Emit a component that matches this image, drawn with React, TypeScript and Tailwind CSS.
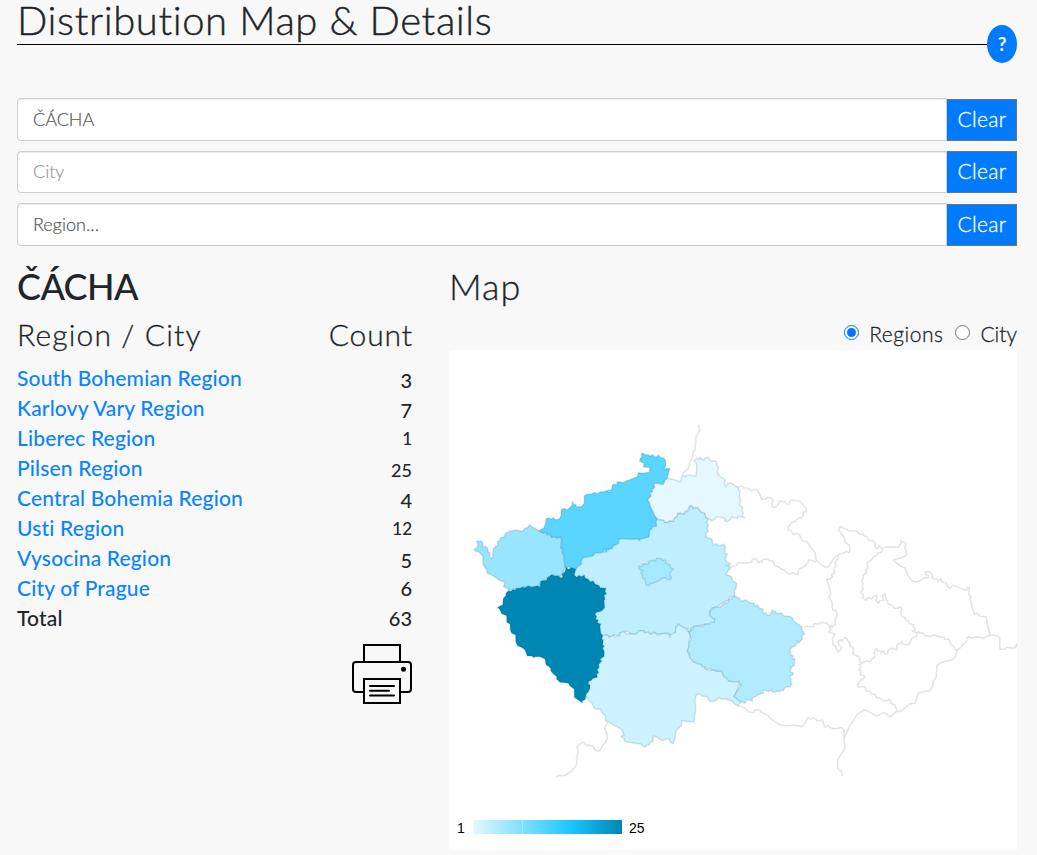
import React from "react";

type Segment = [number, number, string];

// Outlines are stored as runs of points at three units per map pixel, each run with its own origin.
const outline = (segments: Segment[], closed = true) => {
  const points = segments.flatMap(([ox, oy, run]) =>
    run.split(" ").map((pair) => {
      const [x, y] = pair.split(",").map(Number);
      return `${(ox + x / 3).toFixed(1)} ${(oy + y / 3).toFixed(1)}`;
    }),
  );
  return `M${points.join("L")}${closed ? "Z" : ""}`;
};

const regions: { name: string; fill: string; segments: Segment[] }[] = [
  {
    name: "Central Bohemia",
    fill: "#bfeeff",
    segments: [
      [600, 420, "170,298 190,300 195,307 205,306 208,302 220,304 222,295 230,290 233,280 240,279 252,283 254,276 265,270 268,258 275,257 280,264 292,262 300,272 303,276 315,280 318,293 325,298 320,306 325,315 322,325 325,335 318,340 318,352 335,356 340,375 350,371 355,377 372,373 376,382 375,400 382,402 376,412 378,425 392,432 385,438"],
      [580, 540, "437,75 450,80 445,92 438,103 455,110 457,122 470,130 468,145 463,152 465,168 448,172 446,180 430,187 410,202 395,204 389,215 392,228 405,237 405,247 396,258 385,252 365,255 345,260 333,265 332,275 325,275 322,265 310,265 295,253 288,262 287,274 280,288 270,284 260,280 245,282 230,282 222,275 215,282 205,278 200,282 191,272 180,272 170,283 155,282 137,273 133,280 120,279 116,287 105,284 100,292 88,290 80,285 68,290"],
      [480, 560, "340,230 330,180 350,100 280,60 270,20"],
      [600, 420, "0,380 100,340 165,290"],
    ],
  },
  {
    name: "Liberec",
    fill: "#e5f8ff",
    segments: [
      [600, 420, "204,175 215,178 225,180 240,185 248,168 256,169 265,165 288,168 290,150 290,135 287,126 282,122 290,115 297,118 300,112 305,117 313,122 315,113 325,112 330,120 335,125 343,122 350,125 350,134 355,140 352,158 360,170 375,178 373,190 378,200 383,191 390,188 400,193 413,202 417,212 420,215 418,227 421,240 419,255 427,262 425,272 430,278 427,288 434,293 420,290 415,289 412,295 395,290 390,300 383,305 375,302 375,295 350,290 345,297 335,302 322,294 318,293 315,280 303,276 300,272 292,262 280,264 275,257 268,258 265,270 254,276 252,283 240,279 233,280 230,290 222,295 220,304 208,302 205,306 195,307 190,300 170,298 160,278 150,258 142,240 150,230 155,215 163,203 161,190 175,190 188,193 194,180"],
    ],
  },
  {
    name: "South Bohemian",
    fill: "#ccf3ff",
    segments: [
      [570, 620, "95,48 105,44 115,47 118,52 130,45 135,52 150,47 150,38 163,34 168,42 185,42 200,42 205,32 220,32 224,39 235,36 240,42 255,38 262,45 285,40 297,42 300,52 304,43 317,37 317,24 325,12 340,22 350,28 354,36 358,35 362,50 358,60 358,75 353,95 362,112 375,128 388,124 390,132 402,137 405,147 421,152 425,147 435,153 454,152 460,165 475,175 478,184 487,182 510,185 513,194 505,198 502,213 492,230 515,245 502,257 492,250 485,243 465,236 456,238 445,233 440,240 425,245 418,243 412,230 395,228 390,223 380,222 375,240 377,270 373,290 373,305 360,305 335,302 335,315 318,332 315,355 310,370 302,368 300,360 292,355 278,362 257,350 250,348 248,365 240,366 238,375 230,375 225,382 220,379 212,372 165,365 162,355 153,350 162,345 158,340 160,335 150,325 125,312 116,306 108,303 105,285 95,278 92,268 75,267 65,250 48,230 40,180 60,60"],
    ],
  },
  {
    name: "Vysocina",
    fill: "#b2ebff",
    segments: [
      [680, 560, "162,108 178,115 185,124 197,120 205,124 210,130 222,130 225,138 232,135 240,145 248,147 248,158 259,159 262,166 270,165 277,150 284,154 290,160 305,160 312,168 330,169 338,175 341,183 352,191 365,200 367,213 374,222 365,229 367,238 355,250 352,242 350,250 345,258 335,262 329,270 332,285 340,288 337,295 345,298 342,317 335,320 330,335 340,338 338,345 330,348 332,358 332,365 336,372 330,380 315,382 310,392 305,390 298,395 290,393 285,397 277,396 275,390 265,394 250,390 250,400 237,403 225,410 217,413 217,424 205,418 198,422 195,430 188,425 175,422 170,415 162,410 170,395 180,380 185,375 177,370 178,364 160,365 145,362 141,356 130,348 127,332 112,334 104,329 95,330 91,325 79,328 75,321 66,319 65,312 55,312 45,307 38,304 28,290 28,280 22,272 26,262 28,245 34,240 28,215 34,212 35,205 40,207 42,198 70,198 75,193 90,192 92,187 103,187 105,177 98,175 88,165 92,150 103,142 120,142 132,130 145,127 146,119 155,116"],
    ],
  },
  {
    name: "City of Prague",
    fill: "#a6e8ff",
    segments: [
      [580, 540, "175,78 185,80 190,72 205,73 207,64 220,61 227,63 230,55 245,56 248,61 257,61 258,70 270,75 272,84 281,87 270,98 270,107 275,113 270,119 262,118 257,113 245,115 235,123 215,131 210,129 208,137 198,135 195,118 187,114 187,105 182,99 189,92 178,88"],
    ],
  },
  {
    name: "Karlovy Vary",
    fill: "#99e5ff",
    segments: [
      [465, 440, "35,303 49,303 53,310 53,320 62,319 68,325 70,337 75,338 75,354 83,354 83,337 86,325 98,315 98,305 105,300 106,293 118,290 121,281 130,275 152,270 165,272 170,275 180,265 188,262 194,254 200,260 212,266 222,272 235,279 245,277 247,284 256,283 260,292 267,289 275,293 287,291 290,300 288,325 295,327 291,335 298,350 298,362 300,380 295,395"],
      [480, 560, "240,52 215,45 200,55 180,68 180,80 155,82 145,78 120,85 100,88 85,93 85,86 75,82 70,80 75,70 72,65 60,62 50,55 38,47 30,42 22,40 20,30 10,15 8,0"],
      [465, 440, "55,352 50,346 45,340 38,333 33,335 28,328 38,321 38,313"],
    ],
  },
  {
    name: "Usti",
    fill: "#59d5ff",
    segments: [
      [465, 440, "222,272 237,263 242,248 243,236 252,234 258,238 265,233 272,239 283,237 288,228 289,209 297,205 305,210 312,205 322,195 322,184 327,193 333,195 335,201 342,199 346,201 353,196 358,190 358,167 365,163 380,162 388,157 396,161 407,155 425,154 436,156 438,149"],
      [600, 420, "0,217 30,213 35,207 37,195 42,193 50,194 51,186 62,185 68,188 80,182 95,177 112,170 115,158 128,160 148,157 150,143 130,140 133,130 119,124 121,115 125,112 124,101 129,99 135,104 147,104 149,109 158,104 164,110 172,110 175,104 180,112 192,115 197,122 197,137 192,148 202,145 209,146 205,163 201,175 194,180 192,190 188,193 175,190 161,190 163,203 155,208 157,215 150,217 152,230 147,232 142,242 148,246 150,258 160,278 163,288 172,296 168,305 170,318 157,321 155,327 149,330 147,351 136,354 120,358 120,362 112,357 90,358 60,356 55,362 57,370 38,379 37,385 25,386 20,395 10,397"],
      [465, 440, "440,325 430,326 425,332 417,327 415,336 408,338 390,340 384,348 375,350 355,352 348,365 350,372 338,380 330,392 318,386 312,380 303,385 300,380 298,362 298,350 291,335 295,327 288,325 290,300 287,291 275,293 267,289 260,292 256,283 247,284 245,277 235,279"],
    ],
  },
  {
    name: "Pilsen",
    fill: "#0086b3",
    segments: [
      [480, 560, "258,22 265,28 275,23 287,28 283,45 290,52 297,46 304,50 313,45 315,54 325,58 330,65 340,63 345,72 358,77 360,83 378,85 375,95 380,102 372,105 375,118 372,120 374,143 365,152 358,155 350,157 345,162 350,170 346,178 355,180 352,188 362,192 360,200 362,218 368,228 365,237 370,240 368,255 373,258 368,265 373,275 372,290 365,293 360,300 365,303 355,315 358,320 352,330 356,338 350,342 352,352 340,355 332,362 326,364 325,373 330,374 330,385 325,395 318,403 316,418 307,423 307,429 295,420 283,412 283,388 270,378 265,370 255,368 240,367 230,358 230,350 218,340 212,332 212,325 205,318 198,315 195,297 180,290 165,290 162,293 155,288 142,288 135,270 128,264 113,257 107,245 107,225 95,220 91,210 90,192 80,187 80,167 65,161 60,150 53,142 68,134 70,115 77,108 78,100 85,93 93,94 100,88 104,91 110,85 120,85 130,80 132,84 145,78 155,82 172,77 180,82 182,64 200,60 201,55 215,44 225,48 235,47 242,54 248,50 246,42 255,35"],
    ],
  },
];

const borders: Segment[][] = [
  [[600, 420, "413,202 425,198 432,204 443,205 455,213 470,208"], [740, 480, "52,31 60,45 65,58 78,57 80,52 92,53 97,57 100,65 95,67 97,80 104,83 113,75 120,63 135,65 143,74 148,72 152,60 178,62 190,75 200,90 198,95 190,96 190,106 184,113 175,114 168,122 153,130 150,137 144,140 145,150 152,151 160,164 170,160 178,163 186,182 200,185 213,203 225,217 228,240 245,255 260,263 267,258 283,233 298,222 310,220 320,214 325,218 330,214 328,195 315,187 312,172 308,165 295,150 302,139 310,144 320,148 328,153 350,153 360,163 370,162 372,168 380,170 387,181 400,183 407,190 404,200 412,206 416,198 425,205 445,201 473,202 483,191 482,182 490,186 499,190 494,205 499,212 500,225 485,233 470,237 460,241 480,257 495,265 505,288 515,302 525,305 535,305 555,293 565,293 565,284 557,284 557,276 568,275 577,284 576,294 595,299 594,305 603,296 604,305 619,309 622,319 630,325 638,316 675,331 680,330 680,324 688,323 687,345 694,352 690,358 693,365 699,390 703,402 710,399 720,409 738,410 745,445 750,465"]],
  [[600, 420, "388,449 398,437 407,437 413,430"], [740, 480, "0,248 20,250 35,246 37,238 47,236 53,243 53,249 62,244 65,247 67,240 82,236 88,242 98,242 105,257 115,260 125,268 133,270 140,279 150,283 159,278 167,283 173,284 177,268 195,258 208,240 228,245"]],
  [[740, 480, "298,222 290,242 284,249 288,255 283,265 283,279 275,283 277,290 269,298 260,297 268,323 272,339 267,351 276,367 276,382 280,392 287,390 292,405 290,412 284,417 287,434 276,437 277,443 268,440 272,450 266,457 285,462 278,475 279,495 287,498 287,505 295,515 303,508 305,503 297,495 294,485 302,478 305,484 315,473 320,476 330,491 330,498 340,503 340,513 337,519 347,527 358,530 360,545 365,550 357,555 363,560 357,570 363,573 360,583 374,588 370,599 364,598 353,615 353,620 375,620 378,633 388,632 397,643 405,643 411,656 418,653 430,663 446,661 447,657 454,663 451,669 465,675 472,693"]],
  [[740, 480, "190,440 202,439 220,440 222,431 237,431 245,427 260,430 265,435 280,438"]],
  [[740, 480, "425,205 427,214 421,218 412,218 412,225 400,230 397,238 382,248 384,262 377,272 380,277 370,285 370,295 364,302 370,310 366,320 369,326 361,337 370,345 367,352 378,361 384,352 394,357 404,347 411,346 410,357 408,362 416,370 418,362 431,361 428,347 435,341 439,361 443,363 445,373 458,376 462,385 472,385 480,380 485,385 482,403 488,410 493,411 499,422 505,423 507,430 521,434 519,440 527,449 516,452 524,457 535,460"]],
  [[740, 480, "365,550 380,543 390,545 395,539 405,530 403,514 410,505 413,513 423,513 423,519 431,513 434,522 443,521 445,509 456,505 471,509 470,495 477,491 484,490 485,484 490,492 503,495 505,491 509,492 515,476 530,467 530,460 536,455 540,460 547,458 555,467 573,469 582,464 600,472 612,472 614,478 625,478 630,484 632,493 640,498 644,507 652,510 660,504 668,494 680,484 680,474 688,470 693,474 711,471 720,472 730,475 750,465 760,466 775,468 779,474 780,507 795,508 801,502 820,505 827,501 831,490"]],
  [[570, 620, "502,257 520,260 530,270 540,277"], [740, 480, "42,696 44,689 60,689 62,695 85,707 87,712 105,725 120,735 135,737 170,736 185,740 193,732 200,719 203,712 213,717 221,713 232,723 248,721 253,740 258,741 262,737 281,747 305,743 312,750 312,780 316,805 305,820 293,839 293,865 303,873 307,888"]],
  [[740, 480, "312,775 330,735 343,718 352,703 372,690 378,691 410,708 430,698 438,700 447,710 459,705 460,701 472,693 480,695 490,688 508,672 525,670 535,640 545,637 570,632 577,621 581,603 588,592 592,555 605,547 635,540 645,532 652,510"]],
  [[600, 420, "246,168 250,159 265,145 272,123 277,115 280,95 285,91 288,52 298,33 298,20 293,15"]],
  [[445, 700, "488,68 482,78 479,86 485,98 487,115 480,130 476,132 470,141 466,151 458,154 449,148 443,137 435,137 431,134 427,138 421,133 413,126 398,138 396,141 399,150 399,162 394,172 396,182 393,197 382,211 366,223 357,227 342,226 333,230"]],
];

// Counts sit like old-style figures: ascending ones on the line, the rest lowered or small.
const rows = [
  { name: "South Bohemian Region", count: "3", cls: "top-[2px]" },
  { name: "Karlovy Vary Region", count: "7", cls: "top-[2px]" },
  { name: "Liberec Region", count: "1", cls: "top-px text-[17px]" },
  { name: "Pilsen Region", count: "25", cls: "top-[2px] text-[18px]" },
  { name: "Central Bohemia Region", count: "4", cls: "top-[2px]" },
  { name: "Usti Region", count: "12", cls: "top-px text-[17px]" },
  { name: "Vysocina Region", count: "5", cls: "top-[2px]" },
  { name: "City of Prague", count: "6", cls: "" },
];

function Field({ text, textClass, className }: { text: string; textClass: string; className: string }) {
  return (
    <div className={`flex items-end ${className}`}>
      <div className="flex h-full flex-1 items-center rounded-l-[4px] border border-[#ccc] bg-white pb-[2px] pl-[15px] shadow-[inset_0_1px_1px_rgba(0,0,0,0.075)]">
        <span className={`text-[18px] leading-[24px] [-webkit-text-stroke:0.2px] ${textClass}`}>{text}</span>
      </div>
      <button className="h-[42px] w-[70px] border border-[#6c757d] border-l-[#007bff] bg-[#007bff] pb-[2px] text-[21px] leading-[30px] tracking-[0.35px] text-white [-webkit-text-stroke:0.3px]">
        Clear
      </button>
    </div>
  );
}

function PrinterIcon() {
  return (
    <svg width="60" height="60" viewBox="0 0 60 60" fill="none" stroke="#000" strokeWidth="2">
      <path d="M12 18V1h36v17" />
      <path d="M12 48H4a3 3 0 0 1-3-3V21a3 3 0 0 1 3-3h52a3 3 0 0 1 3 3v24a3 3 0 0 1-3 3h-8" />
      <path d="M12 35h36v24H12z" />
      <path d="M18 42h24M18 46.8h19M18 51.6h24" strokeLinecap="round" />
      <circle cx="51.5" cy="25.3" r="2.5" fill="#000" stroke="none" />
    </svg>
  );
}

export default function App() {
  return (
    <div className="min-h-[855px] w-full bg-[#f8f8f8] pr-5 pl-[17px] font-['Lato',sans-serif] font-light text-[#212529]">
      <header className="relative h-[45px] border-b border-black">
        <h1 className="text-[40px] leading-[40px] tracking-[0.6px] whitespace-nowrap [-webkit-text-stroke:0.4px]">Distribution Map &amp; Details</h1>
        <button className="absolute top-[25px] right-0 h-[38px] w-[30px] rounded-[50%] bg-[#007bff] text-[19px] leading-[38px] font-bold text-white">
          ?
        </button>
      </header>

      <section className="pt-[53px]">
        <Field text="ČÁCHA" textClass="text-[#555]" className="h-[43px]" />
        <Field text="City" textClass="text-[#999]" className="mt-[10px] h-[42px]" />
        <Field text="Region…" textClass="text-[#555]" className="mt-[10px] h-[43px]" />
      </section>

      <main className="flex h-[609px] justify-between">
        <section className="w-[395px] pt-[19px]">
          <h2 className="text-[36px] leading-[42px] font-medium tracking-[-0.6px] whitespace-nowrap">ČÁCHA</h2>
          <div className="mt-[9px] flex h-[36px] justify-between text-[30px] leading-[36px] [-webkit-text-stroke:0.3px]">
            <span className="tracking-[1.15px]">Region / City</span>
            <span className="-mr-px tracking-[0.9px]">Count</span>
          </div>
          <div className="mt-[11px] text-[20px] font-medium">
            {rows.map((row) => (
              <div key={row.name} className="flex h-[30px] justify-between leading-[30px]">
                <a className="text-[21px] tracking-[0.16px] text-[#0a84ff]">{row.name}</a>
                <span className={`relative ${row.cls}`}>{row.count}</span>
              </div>
            ))}
            <div className="flex h-[30px] justify-between leading-[30px]">
              <span className="text-[21px] tracking-[0.16px]">Total</span>
              <span>63</span>
            </div>
          </div>
          <div className="mt-[11px] flex justify-end">
            <PrinterIcon />
          </div>
        </section>

        <section className="w-[568px] pt-[19px]">
          <h2 className="text-[36px] leading-[42px] tracking-[1px] [-webkit-text-stroke:0.3px]">Map</h2>
          <div className="mt-[12px] flex h-[30px] items-center justify-end text-[21px] leading-[30px]">
            <span className="mr-[10px] mb-[3px] flex size-[15px] items-center justify-center rounded-full border-[1.5px] border-[#0075ff] bg-white">
              <span className="size-[9px] rounded-full bg-[#0075ff]" />
            </span>
            <span className="tracking-[0.5px] [-webkit-text-stroke:0.3px]">Regions</span>
            <span className="mr-[10px] mb-[3px] ml-[12px] size-[15px] rounded-full border border-[#767676] bg-white" />
            <span className="[-webkit-text-stroke:0.3px]">City</span>
          </div>
          <div className="mt-px flex h-[500px] flex-col justify-between bg-white">
            <svg className="h-[465px] w-[568px]" viewBox="449 350 568 465" fill="none" strokeLinejoin="round">
              {borders.map((border, i) => (
                <path key={i} d={outline(border, false)} stroke="#e4e4e4" strokeWidth="1.6" />
              ))}
              {regions.map((region) => (
                <path key={region.name} d={outline(region.segments)} fill={region.fill} stroke="#0a4a66" strokeOpacity="0.15" strokeWidth="1.5" />
              ))}
            </svg>
            <div className="flex h-[35px] items-start pt-[5px] pl-2 font-['Liberation_Sans',sans-serif] text-[14px] leading-[16px] font-normal text-black">
              <span className="w-4">1</span>
              <span className="flex h-[14px] w-[149px] bg-[linear-gradient(90deg,#e5f8ff_0%,#80dfff_33%,#1ac5ff_66%,#0086b3_100%)]">
                <span className="ml-[49px] w-px bg-[#ffffff55]" />
              </span>
              <span className="ml-[7px]">25</span>
            </div>
          </div>
        </section>
      </main>
    </div>
  );
}
